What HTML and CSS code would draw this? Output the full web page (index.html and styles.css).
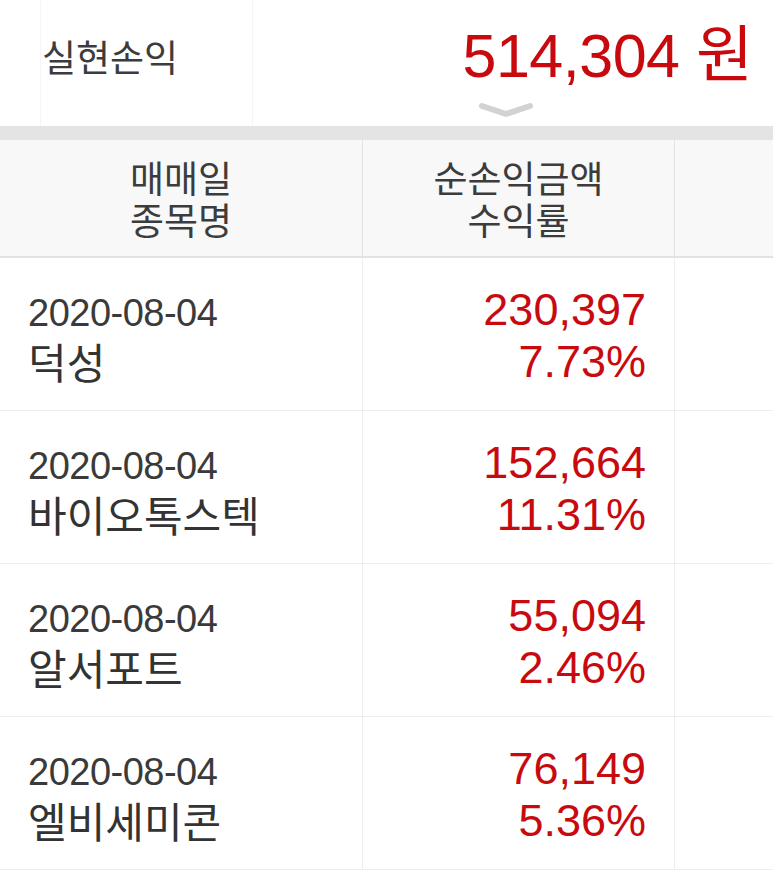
FILE: index.html
```html
<!DOCTYPE html>
<html lang="ko">
<head>
<meta charset="utf-8">
<link rel="stylesheet" href="styles.css">
</head>
<body>
<div class="summary">
  <div class="summary-label">실현손익</div>
  <div class="summary-value">514,304 <span class="won">원</span></div>
  <svg class="chevron" width="56" height="16" viewBox="0 0 56 16"><path d="M4 4 L28 12 L52 4" fill="none" stroke="#d2d2d2" stroke-width="6" stroke-linecap="round" stroke-linejoin="round"/></svg>
</div>
<div class="band"></div>
<div class="table">
  <div class="row head">
    <div class="cell c1"><span class="hl">매매일</span><span class="hl">종목명</span></div>
    <div class="cell c2"><span class="hl">순손익금액</span><span class="hl">수익률</span></div>
    <div class="cell c3"></div>
  </div>
  <div class="row">
    <div class="cell c1"><span class="date">2020-08-04</span><span class="name">덕성</span></div>
    <div class="cell c2"><span class="num">230,397</span><span class="num">7.73%</span></div>
    <div class="cell c3"></div>
  </div>
  <div class="row">
    <div class="cell c1"><span class="date">2020-08-04</span><span class="name">바이오톡스텍</span></div>
    <div class="cell c2"><span class="num">152,664</span><span class="num">11.31%</span></div>
    <div class="cell c3"></div>
  </div>
  <div class="row">
    <div class="cell c1"><span class="date">2020-08-04</span><span class="name">알서포트</span></div>
    <div class="cell c2"><span class="num">55,094</span><span class="num">2.46%</span></div>
    <div class="cell c3"></div>
  </div>
  <div class="row">
    <div class="cell c1"><span class="date">2020-08-04</span><span class="name">엘비세미콘</span></div>
    <div class="cell c2"><span class="num">76,149</span><span class="num">5.36%</span></div>
    <div class="cell c3"></div>
  </div>
</div>
</body>
</html>
```
FILE: styles.css
```css
html, body {
  margin: 0;
  padding: 0;
  background: #ffffff;
}
body {
  width: 773px;
  font-family: "Liberation Sans", "Noto Sans CJK KR", sans-serif;
  color: #3a3a3a;
  overflow: hidden;
}
.summary {
  position: relative;
  height: 126px;
  display: flex;
  justify-content: space-between;
  align-items: flex-start;
  padding: 0 20px 0 42px;
  background: linear-gradient(to right, #fff 0, #fff 40px, #f5f5f5 40px, #f5f5f5 41px, #fff 41px, #fff 252px, #f5f5f5 252px, #f5f5f5 253px, #fff 253px);
}
.summary-label {
  font-family: "Noto Sans CJK KR", sans-serif;
  font-size: 37px;
  line-height: 44px;
  margin-top: 34px;
  color: #3c3c3c;
}
.summary-value {
  font-size: 61px;
  line-height: 70px;
  height: 70px;
  margin-top: 19px;
  color: #c80a0f;
  letter-spacing: -0.5px;
}
.won {
  font-family: "Noto Sans CJK KR", sans-serif;
  font-size: 62px;
  line-height: 1;
  letter-spacing: 0;
}
.chevron {
  position: absolute;
  left: 478px;
  top: 102px;
}
.band {
  height: 14px;
  background: #e4e4e4;
}
.row {
  display: grid;
  grid-template-columns: 363px 312px 1fr;
  height: 152px;
  border-bottom: 1px solid #ededed;
}
.cell {
  border-right: 1px solid #eeeeee;
  display: flex;
  flex-direction: column;
  justify-content: center;
}
.cell.c3 { border-right: none; }
.row.head {
  height: 116px;
  background: #f8f8f8;
  border-bottom: 2px solid #e2e2e2;
}
.row.head .cell {
  padding: 0;
  align-items: center;
  border-right-color: #e3e3e3;
}
.hl {
  display: block;
  height: 42px;
  font-family: "Noto Sans CJK KR", sans-serif;
  font-size: 37px;
  line-height: 42px;
  text-align: center;
  color: #3c3c3c;
}
.c1 {
  padding-left: 28px;
  padding-top: 6px;
}
.date {
  font-size: 38px;
  line-height: 48px;
  color: #3a3a3a;
  letter-spacing: -0.5px;
}
.name {
  font-family: "Noto Sans CJK KR", sans-serif;
  font-size: 42px;
  line-height: 48px;
  color: #333333;
}
.c2 {
  align-items: flex-end;
  padding-right: 28px;
  padding-top: 4px;
}
.num {
  font-size: 45px;
  line-height: 52px;
  color: #c80a0f;
}
```
